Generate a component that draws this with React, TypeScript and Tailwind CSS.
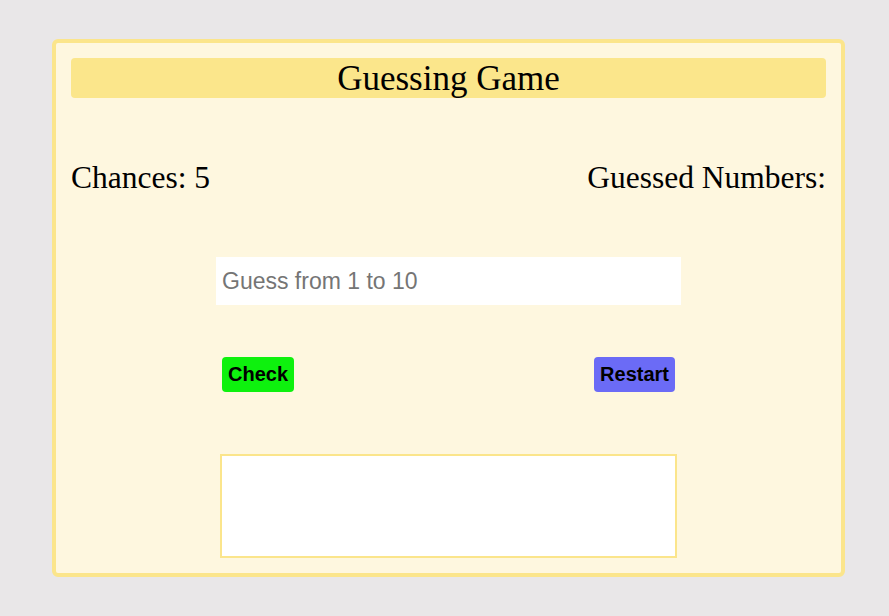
import React from "react";

export default function App() {
  return (
    <div className="min-h-[616px] w-full bg-[#e9e7e8] pt-[39px] pl-[52px]">
      <div className="flex w-[793px] flex-col rounded-[6px] border-[4px] border-[#fbe58b] bg-[#fef7df] p-[15px]">
        <div
          className="flex h-[40px] items-center justify-center rounded-[4px] bg-[#fbe68b] text-[35px] leading-[37px] text-black"
          style={{ fontFamily: '"Liberation Serif", serif' }}
        >
          Guessing Game
        </div>
        <div
          className="mt-[62px] flex h-[36px] items-center justify-between text-[31.5px] leading-[36px] text-black"
          style={{ fontFamily: '"Liberation Serif", serif' }}
        >
          <span>Chances: 5</span>
          <span>Guessed Numbers:</span>
        </div>
        <div className="mt-[61px] flex justify-center">
          <input
            type="text"
            placeholder="Guess from 1 to 10"
            className="h-[48px] w-[465px] bg-white px-[6px] text-[23px] text-black outline-none placeholder:text-[#757575]"
            style={{ fontFamily: '"Liberation Sans", Arial, sans-serif' }}
          />
        </div>
        <div
          className="mt-[52px] flex justify-center"
          style={{ fontFamily: '"Liberation Sans", Arial, sans-serif' }}
        >
          <div className="flex w-[453px] items-center justify-between">
            <button className="h-[35px] rounded-[4px] bg-[#0ef10e] px-[6px] text-[20px] font-bold leading-[23px] text-black">
              Check
            </button>
            <button className="h-[35px] rounded-[4px] bg-[#6b6bf6] px-[6px] text-[20px] font-bold leading-[23px] text-black">
              Restart
            </button>
          </div>
        </div>
        <div className="mt-[62px] flex justify-center">
          <div className="h-[104px] w-[457px] border-[2px] border-[#fbe58b] bg-white"></div>
        </div>
      </div>
    </div>
  );
}
